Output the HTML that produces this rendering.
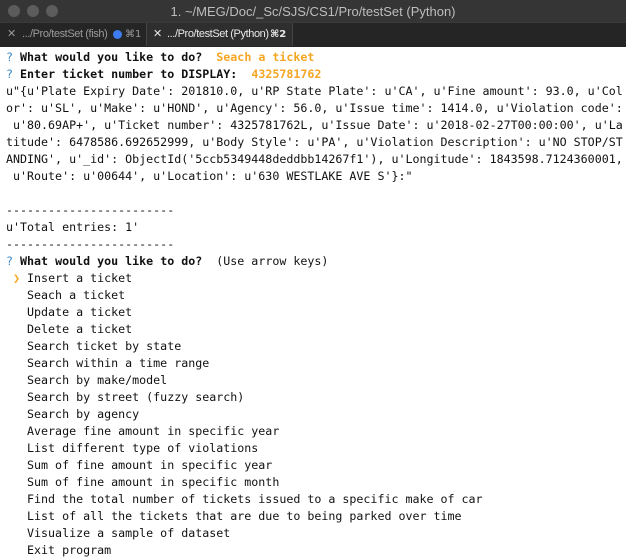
<html><head><style>
body{margin:0;width:626px;height:560px;background:#fff;overflow:hidden;font-family:"Liberation Sans",sans-serif}
.title{height:22px;background:#353535;color:#bdbdbd;font-size:13px;text-align:center;line-height:24px;position:relative}
.dot{position:absolute;top:5px;width:12px;height:12px;border-radius:50%;background:#5c5c5c}
.tabs{height:24px;background:#252525;font-size:11px;color:#9a9a9a;border-top:1px solid #3a3a3a;white-space:nowrap;position:relative}
.tab{position:absolute;top:0;height:23px;line-height:23px;border-right:1px solid #444;box-sizing:border-box}
.tab.a{background:#2e2e2e;color:#e8e8e8}
.tab span{position:absolute;top:0}
.k{font-family:"DejaVu Sans",sans-serif;font-size:10px}
.bd{position:absolute;top:7px;width:9px;height:9px;border-radius:50%;background:#3d7bf0}
pre{margin:0;padding:2px 0 0 6px;font-family:"DejaVu Sans Mono","Liberation Mono",monospace;font-size:11.65px;line-height:17px;color:#111}
.q{color:#3a88c7}.b{font-weight:bold}.o{color:#f5a623;font-weight:bold}.c{color:#f5a623}
</style></head><body>
<div class="title"><span class="dot" style="left:8px"></span><span class="dot" style="left:27px"></span><span class="dot" style="left:46px"></span>1. ~/MEG/Doc/_Sc/SJS/CS1/Pro/testSet (Python)</div>
<div class="tabs"><div class="tab" style="left:0;width:147px"><span style="left:7px">✕</span><span style="left:22px;letter-spacing:-0.4px">.../Pro/testSet (fish)</span><i class="bd" style="left:113px"></i><span class="k" style="left:125px">⌘1</span></div><div class="tab a" style="left:147px;width:146px"><span style="left:6px">✕</span><span style="left:20px;letter-spacing:-0.4px">.../Pro/testSet (Python)</span><span class="k" style="left:123px;font-weight:bold">⌘2</span></div></div>
<pre><span class="q">?</span> <span class="b">What would you like to do?</span>  <span class="o">Seach a ticket</span>
<span class="q">?</span> <span class="b">Enter ticket number to DISPLAY:</span>  <span class="o">4325781762</span>
u"{u'Plate Expiry Date': 201810.0, u'RP State Plate': u'CA', u'Fine amount': 93.0, u'Col
or': u'SL', u'Make': u'HOND', u'Agency': 56.0, u'Issue time': 1414.0, u'Violation code':
 u'80.69AP+', u'Ticket number': 4325781762L, u'Issue Date': u'2018-02-27T00:00:00', u'La
titude': 6478586.692652999, u'Body Style': u'PA', u'Violation Description': u'NO STOP/ST
ANDING', u'_id': ObjectId('5ccb5349448deddbb14267f1'), u'Longitude': 1843598.7124360001,
 u'Route': u'00644', u'Location': u'630 WESTLAKE AVE S'}:"

------------------------
u'Total entries: 1'
------------------------
<span class="q">?</span> <span class="b">What would you like to do?</span>  (Use arrow keys)
 <span class="c">❯</span> Insert a ticket
   Seach a ticket
   Update a ticket
   Delete a ticket
   Search ticket by state
   Search within a time range
   Search by make/model
   Search by street (fuzzy search)
   Search by agency
   Average fine amount in specific year
   List different type of violations
   Sum of fine amount in specific year
   Sum of fine amount in specific month
   Find the total number of tickets issued to a specific make of car
   List of all the tickets that are due to being parked over time
   Visualize a sample of dataset
   Exit program</pre>
</body></html>
